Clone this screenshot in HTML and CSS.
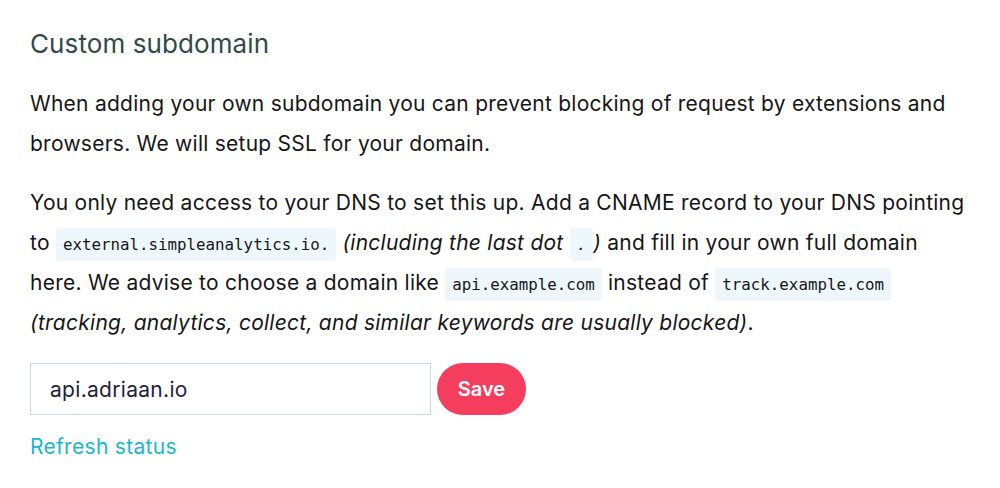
FILE: index.html
```html
<!DOCTYPE html>
<html>
<head>
<meta charset="utf-8">
<link rel="stylesheet" href="styles.css">
</head>
<body>
<section class="panel">
  <h2 class="title">Custom subdomain</h2>
  <p class="text">When adding your own subdomain you can prevent blocking of request by extensions and browsers. We will setup SSL for your domain.</p>
  <p class="text">You only need access to your DNS to set this up. Add a CNAME record to your DNS pointing to <code class="code">external.simpleanalytics.io.</code> <em>(including the last dot <code class="code">.</code>)</em> and fill in your own full domain here. We advise to choose a domain like <code class="code">api.example.com</code> instead of <code class="code">track.example.com</code> <em>(tracking, analytics, collect, and similar keywords are usually blocked)</em>.</p>
  <form class="row">
    <input class="field" type="text" value="api.adriaan.io">
    <button class="save" type="button">Save</button>
  </form>
  <a class="refresh" href="#">Refresh status</a>
</section>
</body>
</html>
```
FILE: styles.css
```css
html, body {
  margin: 0;
  background: #ffffff;
}
body {
  font-family: Inter, "Noto Sans", sans-serif;
  color: #161618;
}
.panel {
  padding: 27px 30px 0 30px;
  width: 940px;
}
.title {
  margin: 0;
  font-size: 26px;
  font-weight: 400;
  letter-spacing: 0.1px;
  line-height: 34px;
  color: #32494a;
}
.text {
  margin: 23px 0 0 0;
  font-size: 21px;
  letter-spacing: 0.25px;
  line-height: 40px;
}
.text + .text {
  margin-top: 19px;
}
.code {
  font-family: "DejaVu Sans Mono", monospace;
  font-size: 15.8px;
  line-height: 1;
  letter-spacing: 0;
  background: #eef7fc;
  padding: 7px 7px;
  border-radius: 3px;
}
.row {
  display: flex;
  gap: 6px;
  margin-top: 20px;
}
.field {
  width: 401px;
  height: 52px;
  box-sizing: border-box;
  border: 1px solid #c9d7e0;
  padding: 0 19px;
  font-family: Inter, sans-serif;
  font-size: 21px;
  letter-spacing: 0.3px;
  color: #23233a;
  outline: none;
}
.save {
  width: 89px;
  height: 52px;
  border: none;
  border-radius: 26px;
  background: #f53d5e;
  color: #ffffff;
  font-family: Inter, sans-serif;
  font-size: 20px;
  font-weight: 600;
}
.refresh {
  display: inline-block;
  margin-top: 19px;
  font-size: 21px;
  letter-spacing: 0.3px;
  color: #1ab8cc;
  text-decoration: none;
}
```
